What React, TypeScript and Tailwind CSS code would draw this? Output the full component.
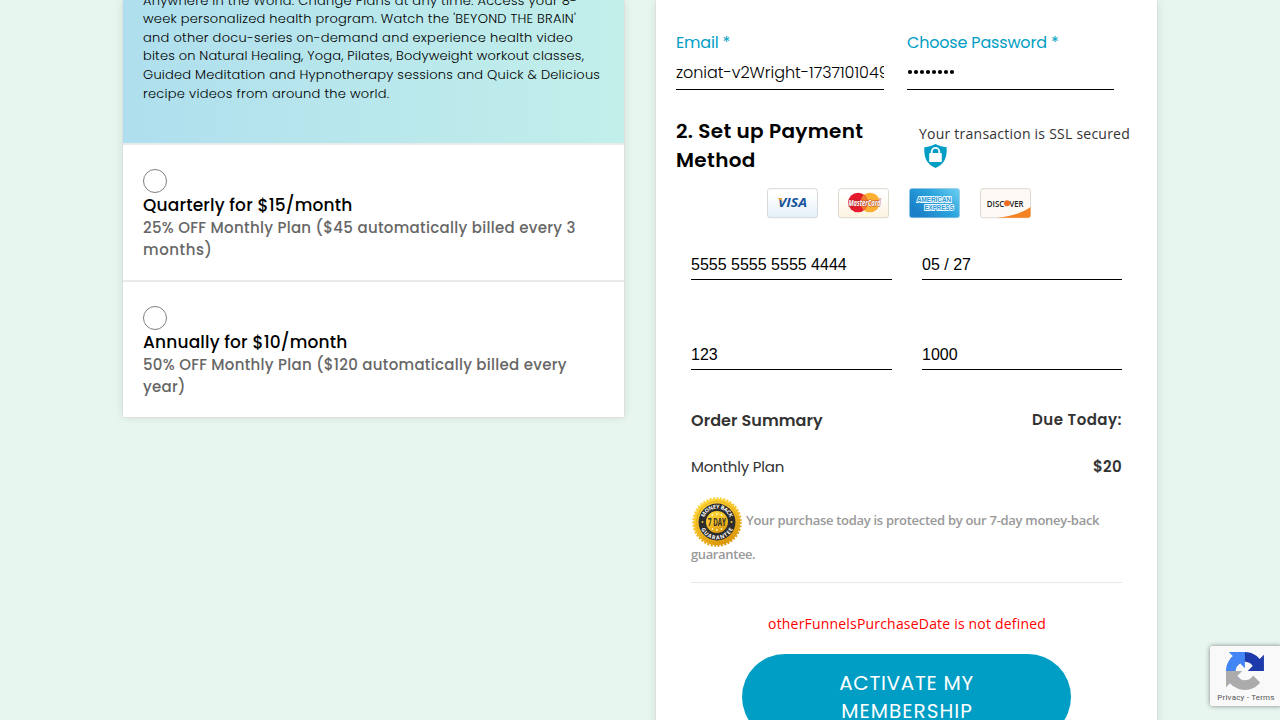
import type { ReactNode } from "react";

const poppins = "font-['Poppins','Inter',sans-serif]";
const openSans = "font-['Open_Sans',sans-serif]";

const planLines = [
  { text: "Anywhere in the World. Change Plans at any time. Access your 8-", cls: "tracking-[0.25px]" },
  { text: "week personalized health program. Watch the 'BEYOND THE BRAIN'", cls: "tracking-[0.23px]" },
  { text: "and other docu-series on-demand and experience health video", cls: "tracking-[0.27px]" },
  { text: "bites on Natural Healing, Yoga, Pilates, Bodyweight workout classes,", cls: "tracking-[0.17px]" },
  { text: "Guided Meditation and Hypnotherapy sessions and Quick & Delicious", cls: "tracking-[0.21px]" },
  { text: "recipe videos from around the world.", cls: "tracking-[0.27px]" },
];

function Plan({ title, children }: { title: string; children: ReactNode }) {
  return (
    <div className="h-[137px] border-t-2 border-[#e9ebea] bg-white px-5 pt-6">
      <div className="size-6 rounded-full border border-[#808080]" />
      <div className="h-6 text-[17px] leading-6 font-medium tracking-[0.17px] text-black">{title}</div>
      <div className="text-[15px] leading-[22px] font-medium text-[#666]">{children}</div>
    </div>
  );
}

function CardField({ value }: { value: string }) {
  return (
    <div className="h-[31px] border-b border-black font-['Liberation_Sans',Arial,sans-serif] text-[16px] leading-[31px] text-black">
      {value}
    </div>
  );
}

function Visa() {
  return (
    <svg width="51" height="31" viewBox="0 0 51 31">
      <defs>
        <linearGradient id="visaBg" x2="0" y2="1">
          <stop offset="0.2" stopColor="#fff" />
          <stop offset="1" stopColor="#e3f0f8" />
        </linearGradient>
      </defs>
      <rect x="0.5" y="0.7" width="50" height="29" rx="2.5" fill="url(#visaBg)" stroke="#d5d9dc" />
      <text x="11" y="19" textLength="29" lengthAdjust="spacingAndGlyphs" fontFamily="Open Sans" fontSize="12.5" fontWeight="700" fontStyle="italic" fill="#17539b">VISA</text>
      <path d="M10.500 10h4l1.300 4.500c-1-2-3-3.400-5.300-4z" fill="#f0a830" />
    </svg>
  );
}

function MasterCard() {
  return (
    <svg width="51" height="31" viewBox="0 0 51 31">
      <defs>
        <linearGradient id="mcBg" x2="0" y2="1">
          <stop offset="0.2" stopColor="#fff" />
          <stop offset="1" stopColor="#fdf3df" />
        </linearGradient>
      </defs>
      <rect x="0.5" y="0.7" width="50" height="29" rx="2.5" fill="url(#mcBg)" stroke="#ddd8d0" />
      <circle cx="32" cy="14.5" r="9.8" fill="#fbb034" />
      <circle cx="20" cy="14.5" r="9.8" fill="#e31b2c" />
      <path d="M26 6.800a9.800 9.800 0 0 1 0 15.400a9.800 9.800 0 0 1 0-15.400z" fill="#f27a30" />
      <text x="10.500" y="17.600" textLength="32" lengthAdjust="spacingAndGlyphs" fontFamily="Open Sans" fontSize="8" fontWeight="700" fontStyle="italic" fill="#fff" stroke="#a8322b" strokeWidth="0.8" paintOrder="stroke">MasterCard</text>
    </svg>
  );
}

function Amex() {
  return (
    <svg width="51" height="31" viewBox="0 0 51 31">
      <defs>
        <linearGradient id="amexBg" x1="1" x2="0" y2="0.6">
          <stop offset="0" stopColor="#6fd0f2" />
          <stop offset="0.5" stopColor="#2aa3dd" />
          <stop offset="1" stopColor="#1a80c8" />
        </linearGradient>
      </defs>
      <rect x="0.5" y="0.5" width="50" height="29.200" rx="2.500" fill="url(#amexBg)" stroke="#8fc3e0" strokeWidth="0.600" />
      <g fontFamily="Liberation Sans" fontWeight="700" fontSize="6.600" fill="#2a97d4" stroke="#f0faff" strokeWidth="1.800" paintOrder="stroke">
        <text x="8" y="14.200" textLength="34" lengthAdjust="spacingAndGlyphs">AMERICAN</text>
        <text x="15.500" y="21.800" textLength="29" lengthAdjust="spacingAndGlyphs">EXPRESS</text>
      </g>
    </svg>
  );
}

function Discover() {
  return (
    <svg width="51" height="31" viewBox="0 0 51 31">
      <rect x="0.500" y="0.700" width="50" height="29" rx="2.500" fill="#fdfaf6" stroke="#ddd8d3" />
      <path d="M50.500 19C44 24 34 28 17 29.700h31a2.500 2.500 0 0 0 2.500-2.500z" fill="#f58220" />
      <g fontFamily="Open Sans" fontSize="9.200" fontWeight="600" fill="#222">
        <text x="6.800" y="18.500" textLength="17.500" lengthAdjust="spacingAndGlyphs">DISC</text>
        <text x="29.500" y="18.500" textLength="14" lengthAdjust="spacingAndGlyphs">VER</text>
      </g>
      <circle cx="27" cy="15.200" r="3" fill="#ee6a20" />
    </svg>
  );
}

function Seal() {
  return (
    <svg width="52" height="52" viewBox="0 0 52 52" className="shrink-0">
      <defs>
        <linearGradient id="gold" x1="0.2" x2="0.7" y2="1">
          <stop offset="0" stopColor="#ffd83b" />
          <stop offset="0.5" stopColor="#f6bf25" />
          <stop offset="1" stopColor="#d99308" />
        </linearGradient>
        <path id="sealTop" d="M12.600 26a13.400 13.400 0 0 1 26.800 0" />
        <path id="sealBottom" d="M8.600 26a17.400 17.400 0 0 0 34.800 0" />
      </defs>
      <circle cx="26" cy="26" r="23.300" fill="url(#gold)" />
      <circle cx="26" cy="26" r="23.700" fill="none" stroke="url(#gold)" strokeWidth="2.200" strokeDasharray="2 1.450" />
      <circle cx="26" cy="26" r="20.300" fill="none" stroke="#d39a12" strokeWidth="0.600" />
      <circle cx="26" cy="26" r="18.500" fill="#2d2d2d" />
      <circle cx="26" cy="26" r="11" fill="url(#gold)" />
      <g fontFamily="Open Sans" fontWeight="700" fontSize="5.400" fill="#fff">
        <text><textPath href="#sealTop" startOffset="50%" textAnchor="middle" textLength="33">MONEY BACK</textPath></text>
        <text><textPath href="#sealBottom" startOffset="50%" textAnchor="middle" textLength="40">GUARANTEE</textPath></text>
      </g>
      <g fill="#f6c52c">
        <circle cx="11.500" cy="26" r="1" />
        <circle cx="40.500" cy="26" r="1" />
      </g>
      <g fill="#fff3b5">
        <circle cx="21.500" cy="19" r="0.900" />
        <circle cx="26" cy="18" r="1" />
        <circle cx="30.500" cy="19" r="0.900" />
        <circle cx="21.500" cy="33" r="0.900" />
        <circle cx="26" cy="34" r="1" />
        <circle cx="30.500" cy="33" r="0.900" />
      </g>
      <text x="17" y="29.500" textLength="18" lengthAdjust="spacingAndGlyphs" fontFamily="Open Sans" fontWeight="700" fontSize="10.500" fill="#2d2d2d">7 DAY</text>
    </svg>
  );
}

const recaptchaArrow =
  "M31.862.094l-1.370.033H4.594l7.160 7.160C4.580 13.147 0 22.060 0 32.046c0 10.400 4.960 19.622 12.640 25.458L24.500 45.768a15.550 15.550 0 0 1-5.334-4.754c-1.600-2.050-2.906-4.952-2.906-8.968 0-.485.057-.860.163-1.135.393-4.976 3.140-9.288 7.124-11.828l8.307 8.307L31.860.095";

export default function App() {
  return (
    <div className={`relative flex h-[720px] w-[1280px] items-start gap-8 overflow-hidden bg-[#e7f7f0] pl-[123px] ${poppins}`}>
      <section className="w-[501px] shrink-0 bg-white shadow-[0_0_10px_rgba(0,0,0,0.1),0_0_0_1px_#e6eae8]">
        <div className="h-[143px] overflow-hidden bg-linear-to-r from-[#afdfee] to-[#c2efea] px-5">
          <div className="-mt-[8.3px] text-[13px] leading-[18.57px] font-light whitespace-nowrap text-black">
            {planLines.map((l) => (
              <div key={l.text} className={l.cls}>{l.text}</div>
            ))}
          </div>
        </div>
        <Plan title="Quarterly for $15/month">
          <div className="tracking-[0.3px] whitespace-nowrap">25% OFF Monthly Plan ($45 automatically billed every 3</div>
          <div className="tracking-[0.55px]">months)</div>
        </Plan>
        <Plan title="Annually for $10/month">
          <div className="tracking-[0.28px] whitespace-nowrap">50% OFF Monthly Plan ($120 automatically billed every</div>
          <div className="tracking-[0.3px]">year)</div>
        </Plan>
      </section>

      <section className="h-[760px] w-[501px] shrink-0 bg-white pt-[31px] shadow-[0_0_10px_rgba(0,0,0,0.1),0_0_0_1px_#e6eae8]">
        <div className="flex gap-[23px] pl-5 text-[16px] leading-6">
          <div className="w-[208px]">
            <div className="mb-1.5 tracking-[-0.2px] text-[#009ec5]">Email *</div>
            <div className="h-[29px] overflow-hidden border-b border-black font-light tracking-[-0.03px] whitespace-nowrap text-black">
              zoniat-v2Wright-1737101049
            </div>
          </div>
          <div className="w-[207px]">
            <div className="mb-1.5 tracking-[-0.18px] text-[#009ec5]">Choose Password *</div>
            <div className="h-[29px] border-b border-black">
              <svg width="50" height="24" viewBox="0 0 50 24">
                {[0, 1, 2, 3, 4, 5, 6, 7].map((i) => (
                  <circle key={i} cx={3 + i * 6} cy="11" r="2.1" />
                ))}
              </svg>
            </div>
          </div>
        </div>

        <div className="mt-[27px] flex h-[57px] pl-5">
          <h2 className="w-[243px] text-[20px] leading-[29px] font-semibold text-black">
            <span className="tracking-[0.3px]">2. Set up Payment</span>
            <br />
            <span className="tracking-[0.35px]">Method</span>
          </h2>
          <div className={`pt-[7px] text-[14px] leading-5 tracking-[0.235px] whitespace-nowrap text-[#333] ${openSans}`}>
            Your transaction is SSL secured
            <svg width="23" height="24" viewBox="0 0 23 24" className="ml-[5px]">
              <path d="M11.500 0C14 1.500 18 3 22.600 3.300 23.300 13 20.500 20.500 11.500 24 2.500 20.500-.3 13 .4 3.300 5 3 9 1.500 11.500 0z" fill="#009ec5" />
              <rect x="5.200" y="9" width="12.600" height="9" rx="0.800" fill="#fff" />
              <path d="M7.700 9.500V7.700a3.800 3.800 0 0 1 7.600 0v1.800" fill="none" stroke="#fff" strokeWidth="1.800" />
            </svg>
          </div>
        </div>

        <div className="mt-3.5 flex justify-center gap-5 pr-[15px]">
          <Visa />
          <MasterCard />
          <Amex />
          <Discover />
        </div>

        <div className="mt-[30px] px-[35px]">
          <div className="grid grid-cols-[201px_200px] gap-x-[30px] gap-y-[59px]">
            <CardField value="5555 5555 5555 4444" />
            <CardField value="05 / 27" />
            <CardField value="123" />
            <CardField value="1000" />
          </div>

          <div className="mt-[38px] flex h-6 justify-between leading-6 font-semibold text-[#333]">
            <span className="pt-px text-[16px] tracking-[0.07px]">Order Summary</span>
            <span className="text-[15px] tracking-[0.48px]">Due Today:</span>
          </div>
          <div className="mt-[23px] flex h-6 justify-between text-[15px] leading-6 text-[#333]">
            <span className="tracking-[-0.2px]">Monthly Plan</span>
            <span className="font-semibold tracking-[0.3px]">$20</span>
          </div>

          <div className={`mt-[17px] text-[13px] font-semibold text-[#999] ${openSans}`}>
            <div className="flex h-[52px] items-center gap-[3px] whitespace-nowrap">
              <Seal />
              <span className="-mt-0.5 tracking-[-0.29px]">Your purchase today is protected by our 7-day money-back</span>
            </div>
            <div className="h-[34px] leading-[13px] tracking-[-0.38px]">guarantee.</div>
          </div>
          <div className="h-px bg-[#e8e8e8]" />
        </div>

        <p className={`mt-[31px] pl-px text-center text-[14px] leading-5 tracking-[0.19px] text-[#ff0000] ${openSans}`}>otherFunnelsPurchaseDate is not defined</p>
        <button className="mt-5 ml-[86px] block h-[86px] w-[329px] rounded-full bg-[#009ec5] text-[20px] leading-7 text-white">
          <span className="tracking-[0.7px]">ACTIVATE MY</span>
          <br />
          <span className="pl-px tracking-[1px]">MEMBERSHIP</span>
        </button>
      </section>

      <aside className="absolute top-[646px] left-[1210px] flex h-[60px] w-[72px] flex-col items-center rounded-[2px] bg-[#f9f9f9] pt-1.5 shadow-[0_0_5px_gray]">
        <svg width="38" height="38" viewBox="0 0 64 64" className="mr-[2px]">
          <path d={recaptchaArrow} transform="rotate(90 32 32)" fill="#1c3aa9" />
          <path d={recaptchaArrow} fill="#4285f4" />
          <path d="M.001 32.045l.033 1.370v25.898l7.160-7.160c5.860 7.173 14.774 11.754 24.760 11.754 10.400 0 19.622-4.960 25.458-12.640l-11.736-11.860a15.550 15.550 0 0 1-4.754 5.334c-2.050 1.600-4.952 2.906-8.968 2.906-.485 0-.860-.057-1.135-.163-4.976-.393-9.288-3.140-11.828-7.124l8.307-8.307c-10.522.040-22.400.066-27.295-.005" fill="#ababab" />
        </svg>
        <div className="mt-0.5 font-['Roboto',sans-serif] text-[8px] leading-3 tracking-[0.2px] whitespace-nowrap text-[#555]">Privacy - Terms</div>
      </aside>
    </div>
  );
}
